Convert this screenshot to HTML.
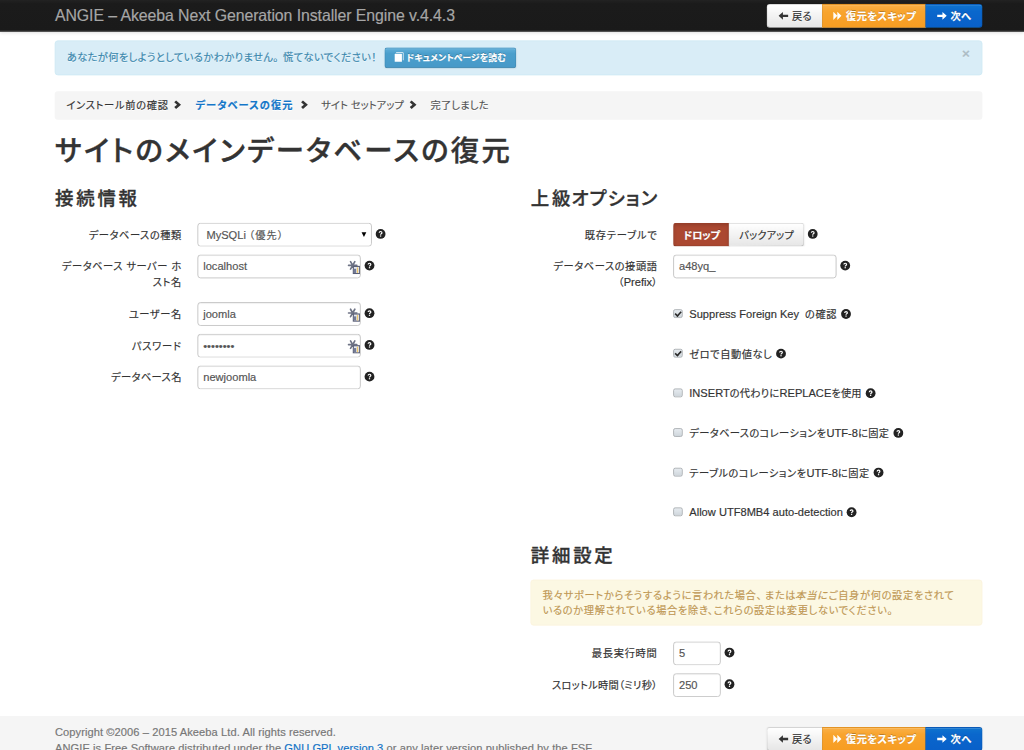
<!DOCTYPE html>
<html lang="ja">
<head>
<meta charset="utf-8">
<title>ANGIE – Akeeba Next Generation Installer Engine v.4.4.3</title>
<style>
html,body{margin:0;padding:0;}
html{background:#fff;}
body{width:1024px;height:750px;overflow:hidden;position:relative;background:#fff;}
#stage{position:absolute;left:0;top:0;width:1291.5px;height:946px;transform:scale(0.7929);transform-origin:0 0;
  font-family:"Liberation Sans","Noto Sans CJK JP",sans-serif;font-size:14px;line-height:20px;color:#333;
  font-feature-settings:"palt" 1;overflow:hidden;background:#fff;-webkit-text-stroke:.22px currentColor;}
#stage *{box-sizing:content-box;}
a{color:#1273c6;text-decoration:none;}
.container{width:1170px;margin:0 0 0 69.3px;position:relative;}
/* navbar */
.navbar{position:absolute;left:0;right:0;top:0;height:39px;background:linear-gradient(to bottom,#222 0,#1b1b1b 12%,#1a1a1a 100%);border-bottom:1px solid #0e0e0e;box-shadow:0 1px 4px rgba(0,0,0,.12);z-index:5;}
.brand{position:absolute;left:0;top:0;padding:10px 20px 10px 0;font-size:20px;font-weight:200;color:#a6a6a6;line-height:20px;white-space:nowrap;letter-spacing:-.1px;}
.navbar .btn-group{position:absolute;right:0;top:5px;}
/* buttons */
.btn{display:inline-block;padding:4px 12px;margin:0;font-size:14px;line-height:20px;color:#333;text-align:center;text-shadow:0 1px 1px rgba(255,255,255,.75);vertical-align:middle;background-color:#f5f5f5;background-image:linear-gradient(to bottom,#fff,#e6e6e6);border:1px solid #ccc;border-color:rgba(0,0,0,.1) rgba(0,0,0,.1) rgba(0,0,0,.25);border-bottom-color:#b3b3b3;border-radius:4px;box-shadow:inset 0 1px 0 rgba(255,255,255,.2),0 1px 2px rgba(0,0,0,.05);white-space:nowrap;}
.btn-primary{color:#fff;text-shadow:0 -1px 0 rgba(0,0,0,.25);background-color:#0a66cc;background-image:linear-gradient(to bottom,#0f74cf 0,#0a67cc 30%,#0960c9 100%);border-color:rgba(0,0,0,.1) rgba(0,0,0,.1) rgba(0,0,0,.25);}
.btn-warning{color:#fff;text-shadow:0 -1px 0 rgba(0,0,0,.25);background-color:#f8a32c;background-image:linear-gradient(to bottom,#fab048 0,#f8a42e 30%,#f79d22 100%);border-color:rgba(0,0,0,.1) rgba(0,0,0,.1) rgba(0,0,0,.25);}
.btn-danger{color:#fff;text-shadow:0 -1px 0 rgba(0,0,0,.25);background-color:#da4f49;background-image:linear-gradient(to bottom,#ee5f5b,#bd362f);border-color:rgba(0,0,0,.1) rgba(0,0,0,.1) rgba(0,0,0,.25);}
.btn-info{color:#fff;text-shadow:0 -1px 0 rgba(0,0,0,.25);background-color:#4a9ecb;background-image:linear-gradient(to bottom,#60aed8 0,#4a9fcc 28%,#4799c8 100%);border-color:rgba(0,0,0,.1) rgba(0,0,0,.1) rgba(0,0,0,.25);}
.btn-small{padding:2px 11.8px 2px 10px;font-size:11.9px;border-radius:3px;margin-left:6px;}
.btn-small .ico{margin-right:2.6px;position:relative;top:-1.6px;}
.btn-group{display:inline-block;font-size:0;white-space:nowrap;vertical-align:middle;}
.btn-group>.btn{border-radius:0;font-size:14px;position:relative;}
.btn-group>.btn+.btn{margin-left:-1px;}
.btn-group>.btn:first-child{border-top-left-radius:4px;border-bottom-left-radius:4px;}
.btn-group>.btn:last-child{border-top-right-radius:4px;border-bottom-right-radius:4px;}
.btn.active{background-image:none;box-shadow:inset 0 2px 4px rgba(0,0,0,.15),0 1px 2px rgba(0,0,0,.05);}
.btn-danger.active{background-color:#ab4831;}
.ico{display:inline-block;width:14px;height:14px;vertical-align:text-top;margin-top:1px;line-height:14px;}
.ico svg{display:block;width:14px;height:14px;}
/* main */
#main{position:absolute;left:0;right:0;top:51px;}
.alert{padding:8px 35px 8px 14px;margin-bottom:20px;text-shadow:0 1px 0 rgba(255,255,255,.5);background-color:#fcf8e3;border:1px solid #fbf2dc;border-radius:4px;color:#c09853;}
.alert-info{color:#3a87ad;background-color:#d9edf7;border-color:#cde9f4;}
.close{float:right;position:relative;top:-2px;right:-20px;font-size:17px;font-weight:bold;line-height:20px;color:#000;text-shadow:0 1px 0 #fff;opacity:.2;}
.breadcrumb{padding:8px 15px;margin:0 0 20px;list-style:none;background-color:#f5f5f5;border-radius:4px;height:20px;}
.breadcrumb{position:relative;padding:0;height:36px;}
.breadcrumb li{position:absolute;top:8px;white-space:nowrap;text-shadow:0 1px 0 #fff;color:#555;}
.breadcrumb li.done{color:#333;}
.breadcrumb li.active{color:#1476c8;font-weight:bold;}
.breadcrumb .ico{display:block;color:#333;margin:0;}
h1{font-size:38.5px;line-height:40px;margin:0 0 10px;font-weight:500;color:#333;}
h3{font-size:24.5px;line-height:40px;margin:10px 0;font-weight:500;color:#333;}
.row{position:relative;height:700px;}
.col{position:absolute;top:0;width:570px;}
.col.l{left:0;}
.col.r{left:600px;}
.cg{margin-bottom:10px;overflow:hidden;}
.cl{float:left;width:160px;padding-top:5px;margin-bottom:5px;text-align:right;}
.ct{margin-left:180px;min-height:30px;}
.inp{display:inline-block;vertical-align:middle;height:20px;padding:4px 6px;font-size:14px;line-height:20px;color:#555;background:#fff;border:1px solid #bcbcbc;border-radius:4px;box-shadow:inset 0 1px 1px rgba(0,0,0,.075);width:192px;position:relative;}
.lp{position:absolute;right:0;top:0;}
.sel:after{content:"";position:absolute;right:6px;top:11px;border:solid transparent;border-width:6px 3.2px 0 3.2px;border-top-color:#000;}
.sel{display:inline-block;vertical-align:middle;height:28px;line-height:28px;padding:0 6px 0 10px;width:202px;border:1px solid #bcbcbc;border-radius:4px;background:#fff;color:#555;position:relative;}
.q{display:inline-block;width:14px;height:14px;vertical-align:middle;margin-left:4px;position:relative;top:-1px;}
.chk .q{top:-1.5px;}
.q svg{display:block;}
.cb{display:inline-block;width:9.4px;height:9.4px;border:1px solid #9da3a8;border-radius:2.5px;background:linear-gradient(#e6ebf0,#cfd6dc);vertical-align:middle;margin:0 6px 3px 0;position:relative;}
.chk{padding:5px 0 0 20px;height:25px;min-height:0;margin-bottom:10px;position:relative;}
.chk .cb{position:absolute;left:0px;top:9px;margin:0;}
.cb.on:after{content:"";position:absolute;left:2.6px;top:0.1px;width:2.6px;height:5.6px;border:solid #2a2a2a;border-width:0 2px 2px 0;transform:rotate(42deg);}
footer{position:absolute;left:0;right:0;top:902.6px;height:60px;background:#f5f5f5;color:#777;letter-spacing:.1px;}
.warn em{display:inline-block;font-style:normal;transform:skewX(-14deg);}
.warn .j{letter-spacing:.86px;white-space:nowrap;}
.j{font-size:.92em;letter-spacing:.04em;line-height:1;font-weight:400;}
h1 .j{font-size:.93em;letter-spacing:2.9px;font-weight:500;-webkit-text-stroke:.5px #333;position:relative;top:-1px;}
h3 .j{font-size:.95em;letter-spacing:3.5px;font-weight:500;-webkit-text-stroke:.4px #333;}
h3 .j .kk{letter-spacing:1.45px;margin-left:-2px;}
.active .j,.btn-warning .j,.btn-primary .j,.btn-info .j,.btn-danger .j{font-weight:bold;}
</style>
</head>
<body>
<div id="stage">
  <div class="navbar"><div class="container">
    <span class="brand">ANGIE – Akeeba Next Generation Installer Engine v.4.4.3</span>
    <div class="btn-group">
      <span class="btn" style="width:68.5px;padding-left:0;padding-right:0"><span class="ico"><svg viewBox="0 0 14 14"><path fill="currentColor" d="M1 7 L6.4 2.2 L6.4 5.5 L13 5.5 L13 8.5 L6.4 8.5 L6.4 11.8 Z"/></svg></span> <span class="j">戻る</span></span><span class="btn btn-warning" style="width:129px;padding-left:0;padding-right:0"><span class="ico"><svg viewBox="0 0 14 14"><path fill="currentColor" d="M2 1.8 L7 7 L2 12.2 Z M7 1.8 L12.2 7 L7 12.2 Z"/></svg></span> <span class="j">復元をスキップ</span></span><span class="btn btn-primary" style="width:70.5px;padding-left:0;padding-right:0"><span class="ico"><svg viewBox="0 0 14 14"><path fill="currentColor" d="M13 7 L7.6 2.2 L7.6 5.5 L1 5.5 L1 8.5 L7.6 8.5 L7.6 11.8 Z"/></svg></span> <span class="j">次へ</span></span>
    </div>
  </div></div>

  <div id="main"><div class="container">
    <div class="alert alert-info"><span class="close">×</span><span class="j">あなたが何をしようとしているかわかりません<span style="margin-right:5.5px">。</span>慌てないでください！</span> <span class="btn btn-info btn-small"><span class="ico"><svg viewBox="0 0 14 14"><path fill="currentColor" d="M1.8 3.2 Q1.8 2.7 2.3 2.7 L10.4 2.7 Q10.9 2.7 10.9 3.2 L10.9 13 L1.8 13 Z"/><path fill="none" stroke="currentColor" stroke-width="0.9" d="M3.6 1.2 L12.1 1.2 Q12.6 1.2 12.6 1.7 L12.6 11"/></svg></span><span class="j" style="letter-spacing:.29px">ドキュメントページを読む</span></span></div>
    <ul class="breadcrumb">
      <li class="done" style="left:14.3px"><span class="j" style="letter-spacing:.95px">インストール前の確認</span></li>
      <li style="left:148px;top:10px" class="chev"><span class="ico"><svg viewBox="0 0 14 14"><path fill="currentColor" d="M2.75 3.9 L5.1 1.65 L11.3 7 L5.1 12.35 L2.75 10.1 L6.3 7 Z"/></svg></span></li>
      <li class="active" style="left:177.3px"><span class="j" style="letter-spacing:1.36px">データベースの復元</span></li>
      <li style="left:307.8px;top:10px" class="chev"><span class="ico"><svg viewBox="0 0 14 14"><path fill="currentColor" d="M2.75 3.9 L5.1 1.65 L11.3 7 L5.1 12.35 L2.75 10.1 L6.3 7 Z"/></svg></span></li>
      <li style="left:335.9px"><span class="j" style="letter-spacing:.09px">サイト セットアップ</span></li>
      <li style="left:445px;top:10px" class="chev"><span class="ico"><svg viewBox="0 0 14 14"><path fill="currentColor" d="M2.75 3.9 L5.1 1.65 L11.3 7 L5.1 12.35 L2.75 10.1 L6.3 7 Z"/></svg></span></li>
      <li style="left:473.6px"><span class="j" style="letter-spacing:.3px">完了しました</span></li>
    </ul>
    <h1><span class="j">サイトのメインデータベースの復元</span></h1>
    <div class="row">
      <div class="col l">
        <h3><span class="j">接続情報</span></h3>
        <div class="cg"><div class="cl"><span class="j" style="letter-spacing:.72px">データベースの種類</span></div><div class="ct"><span class="sel">MySQLi <span class="j" style="letter-spacing:1.4px">（優先）</span></span><span class="q"><svg viewBox="0 0 14 14" width="14" height="14"><circle cx="7" cy="7" r="6.2" fill="#222"/><path d="M5.3 5.6 Q5.3 4 7 4 Q8.7 4 8.7 5.4 Q8.7 6.3 7.8 6.8 Q7 7.3 7 8.1" fill="none" stroke="#fff" stroke-width="1.5"/><rect x="6.2" y="8.9" width="1.6" height="1.5" fill="#fff"/></svg></span></div></div>
        <div class="cg"><div class="cl"><span class="j" style="letter-spacing:.72px">データベース サーバー ホスト名</span></div><div class="ct"><span class="inp">localhost<svg class="lp" viewBox="0 0 18 24" width="18" height="24"><g stroke="#6e7385" stroke-width="2.1" stroke-linecap="round"><path d="M3.6 12.7 H14 M6.1 8 L11.5 17.4 M11.5 8 L6.1 17.4"/></g><rect x="9.6" y="14" width="8" height="9" fill="#e3e7f0" stroke="#5a5f75" stroke-width="1.4"/><rect x="10.4" y="17" width="2.8" height="5.3" fill="#727b98"/><rect x="14.1" y="15.2" width="1.6" height="7" fill="#ecc56a"/></svg></span><span class="q"><svg viewBox="0 0 14 14" width="14" height="14"><circle cx="7" cy="7" r="6.2" fill="#222"/><path d="M5.3 5.6 Q5.3 4 7 4 Q8.7 4 8.7 5.4 Q8.7 6.3 7.8 6.8 Q7 7.3 7 8.1" fill="none" stroke="#fff" stroke-width="1.5"/><rect x="6.2" y="8.9" width="1.6" height="1.5" fill="#fff"/></svg></span></div></div>
        <div class="cg"><div class="cl"><span class="j" style="letter-spacing:.77px">ユーザー名</span></div><div class="ct"><span class="inp">joomla<svg class="lp" viewBox="0 0 18 24" width="18" height="24"><g stroke="#6e7385" stroke-width="2.1" stroke-linecap="round"><path d="M3.6 12.7 H14 M6.1 8 L11.5 17.4 M11.5 8 L6.1 17.4"/></g><rect x="9.6" y="14" width="8" height="9" fill="#e3e7f0" stroke="#5a5f75" stroke-width="1.4"/><rect x="10.4" y="17" width="2.8" height="5.3" fill="#727b98"/><rect x="14.1" y="15.2" width="1.6" height="7" fill="#ecc56a"/></svg></span><span class="q"><svg viewBox="0 0 14 14" width="14" height="14"><circle cx="7" cy="7" r="6.2" fill="#222"/><path d="M5.3 5.6 Q5.3 4 7 4 Q8.7 4 8.7 5.4 Q8.7 6.3 7.8 6.8 Q7 7.3 7 8.1" fill="none" stroke="#fff" stroke-width="1.5"/><rect x="6.2" y="8.9" width="1.6" height="1.5" fill="#fff"/></svg></span></div></div>
        <div class="cg"><div class="cl"><span class="j" style="letter-spacing:1px">パスワード</span></div><div class="ct"><span class="inp">••••••••<svg class="lp" viewBox="0 0 18 24" width="18" height="24"><g stroke="#6e7385" stroke-width="2.1" stroke-linecap="round"><path d="M3.6 12.7 H14 M6.1 8 L11.5 17.4 M11.5 8 L6.1 17.4"/></g><rect x="9.6" y="14" width="8" height="9" fill="#e3e7f0" stroke="#5a5f75" stroke-width="1.4"/><rect x="10.4" y="17" width="2.8" height="5.3" fill="#727b98"/><rect x="14.1" y="15.2" width="1.6" height="7" fill="#ecc56a"/></svg></span><span class="q"><svg viewBox="0 0 14 14" width="14" height="14"><circle cx="7" cy="7" r="6.2" fill="#222"/><path d="M5.3 5.6 Q5.3 4 7 4 Q8.7 4 8.7 5.4 Q8.7 6.3 7.8 6.8 Q7 7.3 7 8.1" fill="none" stroke="#fff" stroke-width="1.5"/><rect x="6.2" y="8.9" width="1.6" height="1.5" fill="#fff"/></svg></span></div></div>
        <div class="cg"><div class="cl"><span class="j">データベース名</span></div><div class="ct"><span class="inp">newjoomla</span><span class="q"><svg viewBox="0 0 14 14" width="14" height="14"><circle cx="7" cy="7" r="6.2" fill="#222"/><path d="M5.3 5.6 Q5.3 4 7 4 Q8.7 4 8.7 5.4 Q8.7 6.3 7.8 6.8 Q7 7.3 7 8.1" fill="none" stroke="#fff" stroke-width="1.5"/><rect x="6.2" y="8.9" width="1.6" height="1.5" fill="#fff"/></svg></span></div></div>
      </div>
      <div class="col r">
        <h3><span class="j">上級<span class="kk">オプション</span></span></h3>
        <div class="cg"><div class="cl"><span class="j" style="letter-spacing:1.04px">既存テーブルで</span></div><div class="ct"><span class="btn-group"><span class="btn btn-danger active" style="width:69px;padding-left:0;padding-right:0"><span class="j" style="letter-spacing:-.37px">ドロップ</span></span><span class="btn" style="width:93px;padding-left:0;padding-right:0"><span class="j" style="letter-spacing:.2px">バックアップ</span></span></span><span class="q"><svg viewBox="0 0 14 14" width="14" height="14"><circle cx="7" cy="7" r="6.2" fill="#222"/><path d="M5.3 5.6 Q5.3 4 7 4 Q8.7 4 8.7 5.4 Q8.7 6.3 7.8 6.8 Q7 7.3 7 8.1" fill="none" stroke="#fff" stroke-width="1.5"/><rect x="6.2" y="8.9" width="1.6" height="1.5" fill="#fff"/></svg></span></div></div>
        <div class="cg"><div class="cl"><span class="j" style="letter-spacing:.76px">データベースの接頭語</span> <span class="j">（</span>Prefix<span class="j">）</span></div><div class="ct"><span class="inp">a48yq_</span><span class="q"><svg viewBox="0 0 14 14" width="14" height="14"><circle cx="7" cy="7" r="6.2" fill="#222"/><path d="M5.3 5.6 Q5.3 4 7 4 Q8.7 4 8.7 5.4 Q8.7 6.3 7.8 6.8 Q7 7.3 7 8.1" fill="none" stroke="#fff" stroke-width="1.5"/><rect x="6.2" y="8.9" width="1.6" height="1.5" fill="#fff"/></svg></span></div></div>
        <div class="cg"><div class="ct chk"><span class="cb on"></span>Suppress Foreign Key <span class="j" style="margin-left:3.5px;letter-spacing:.8px">の確認</span><span class="q"><svg viewBox="0 0 14 14" width="14" height="14"><circle cx="7" cy="7" r="6.2" fill="#222"/><path d="M5.3 5.6 Q5.3 4 7 4 Q8.7 4 8.7 5.4 Q8.7 6.3 7.8 6.8 Q7 7.3 7 8.1" fill="none" stroke="#fff" stroke-width="1.5"/><rect x="6.2" y="8.9" width="1.6" height="1.5" fill="#fff"/></svg></span></div></div>
        <div class="cg"><div class="ct chk"><span class="cb on"></span><span class="j" style="letter-spacing:.69px">ゼロで自動値なし</span><span class="q"><svg viewBox="0 0 14 14" width="14" height="14"><circle cx="7" cy="7" r="6.2" fill="#222"/><path d="M5.3 5.6 Q5.3 4 7 4 Q8.7 4 8.7 5.4 Q8.7 6.3 7.8 6.8 Q7 7.3 7 8.1" fill="none" stroke="#fff" stroke-width="1.5"/><rect x="6.2" y="8.9" width="1.6" height="1.5" fill="#fff"/></svg></span></div></div>
        <div class="cg"><div class="ct chk"><span class="cb"></span>INSERT<span class="j" style="letter-spacing:.26px">の代わりに</span>REPLACE<span class="j" style="letter-spacing:.26px">を使用</span><span class="q"><svg viewBox="0 0 14 14" width="14" height="14"><circle cx="7" cy="7" r="6.2" fill="#222"/><path d="M5.3 5.6 Q5.3 4 7 4 Q8.7 4 8.7 5.4 Q8.7 6.3 7.8 6.8 Q7 7.3 7 8.1" fill="none" stroke="#fff" stroke-width="1.5"/><rect x="6.2" y="8.9" width="1.6" height="1.5" fill="#fff"/></svg></span></div></div>
        <div class="cg"><div class="ct chk"><span class="cb"></span><span class="j">データベースのコレーションを</span>UTF-8<span class="j">に固定</span><span class="q"><svg viewBox="0 0 14 14" width="14" height="14"><circle cx="7" cy="7" r="6.2" fill="#222"/><path d="M5.3 5.6 Q5.3 4 7 4 Q8.7 4 8.7 5.4 Q8.7 6.3 7.8 6.8 Q7 7.3 7 8.1" fill="none" stroke="#fff" stroke-width="1.5"/><rect x="6.2" y="8.9" width="1.6" height="1.5" fill="#fff"/></svg></span></div></div>
        <div class="cg"><div class="ct chk"><span class="cb"></span><span class="j" style="letter-spacing:.64px">テーブルのコレーションを</span>UTF-8<span class="j" style="letter-spacing:.64px">に固定</span><span class="q"><svg viewBox="0 0 14 14" width="14" height="14"><circle cx="7" cy="7" r="6.2" fill="#222"/><path d="M5.3 5.6 Q5.3 4 7 4 Q8.7 4 8.7 5.4 Q8.7 6.3 7.8 6.8 Q7 7.3 7 8.1" fill="none" stroke="#fff" stroke-width="1.5"/><rect x="6.2" y="8.9" width="1.6" height="1.5" fill="#fff"/></svg></span></div></div>
        <div class="cg"><div class="ct chk"><span class="cb"></span>Allow UTF8MB4 auto-detection<span class="q"><svg viewBox="0 0 14 14" width="14" height="14"><circle cx="7" cy="7" r="6.2" fill="#222"/><path d="M5.3 5.6 Q5.3 4 7 4 Q8.7 4 8.7 5.4 Q8.7 6.3 7.8 6.8 Q7 7.3 7 8.1" fill="none" stroke="#fff" stroke-width="1.5"/><rect x="6.2" y="8.9" width="1.6" height="1.5" fill="#fff"/></svg></span></div></div>
        <h3><span class="j">詳細設定</span></h3>
        <div class="alert warn"><span class="j">我々サポートからそうするように言われた場合<span style="margin-right:3.2px">、</span>または<em>本当に</em>ご自身が何の設定をされて<br>いるのか理解されている場合を除き、これらの設定は変更しないでください。</span></div>
        <div class="cg"><div class="cl"><span class="j" style="letter-spacing:.95px">最長実行時間</span></div><div class="ct"><span class="inp" style="width:46px">5</span><span class="q"><svg viewBox="0 0 14 14" width="14" height="14"><circle cx="7" cy="7" r="6.2" fill="#222"/><path d="M5.3 5.6 Q5.3 4 7 4 Q8.7 4 8.7 5.4 Q8.7 6.3 7.8 6.8 Q7 7.3 7 8.1" fill="none" stroke="#fff" stroke-width="1.5"/><rect x="6.2" y="8.9" width="1.6" height="1.5" fill="#fff"/></svg></span></div></div>
        <div class="cg"><div class="cl"><span class="j" style="letter-spacing:.35px">スロットル時間（ミリ秒）</span></div><div class="ct"><span class="inp" style="width:46px">250</span><span class="q"><svg viewBox="0 0 14 14" width="14" height="14"><circle cx="7" cy="7" r="6.2" fill="#222"/><path d="M5.3 5.6 Q5.3 4 7 4 Q8.7 4 8.7 5.4 Q8.7 6.3 7.8 6.8 Q7 7.3 7 8.1" fill="none" stroke="#fff" stroke-width="1.5"/><rect x="6.2" y="8.9" width="1.6" height="1.5" fill="#fff"/></svg></span></div></div>
      </div>
    </div>
  </div></div>

  <footer><div class="container">
    <p style="margin:0;padding-top:10.4px">Copyright ©2006 – 2015 Akeeba Ltd. All rights reserved.<br>ANGIE is Free Software distributed under the <a>GNU GPL version 3</a> or any later version published by the FSF.</p>
    <div class="btn-group" style="position:absolute;right:0;top:14px">
      <span class="btn" style="width:68.5px;padding-left:0;padding-right:0"><span class="ico"><svg viewBox="0 0 14 14"><path fill="currentColor" d="M1 7 L6.4 2.2 L6.4 5.5 L13 5.5 L13 8.5 L6.4 8.5 L6.4 11.8 Z"/></svg></span> <span class="j">戻る</span></span><span class="btn btn-warning" style="width:129px;padding-left:0;padding-right:0"><span class="ico"><svg viewBox="0 0 14 14"><path fill="currentColor" d="M2 1.8 L7 7 L2 12.2 Z M7 1.8 L12.2 7 L7 12.2 Z"/></svg></span> <span class="j">復元をスキップ</span></span><span class="btn btn-primary" style="width:70.5px;padding-left:0;padding-right:0"><span class="ico"><svg viewBox="0 0 14 14"><path fill="currentColor" d="M13 7 L7.6 2.2 L7.6 5.5 L1 5.5 L1 8.5 L7.6 8.5 L7.6 11.8 Z"/></svg></span> <span class="j">次へ</span></span>
    </div>
  </div></footer>
</div>
</body>
</html>
